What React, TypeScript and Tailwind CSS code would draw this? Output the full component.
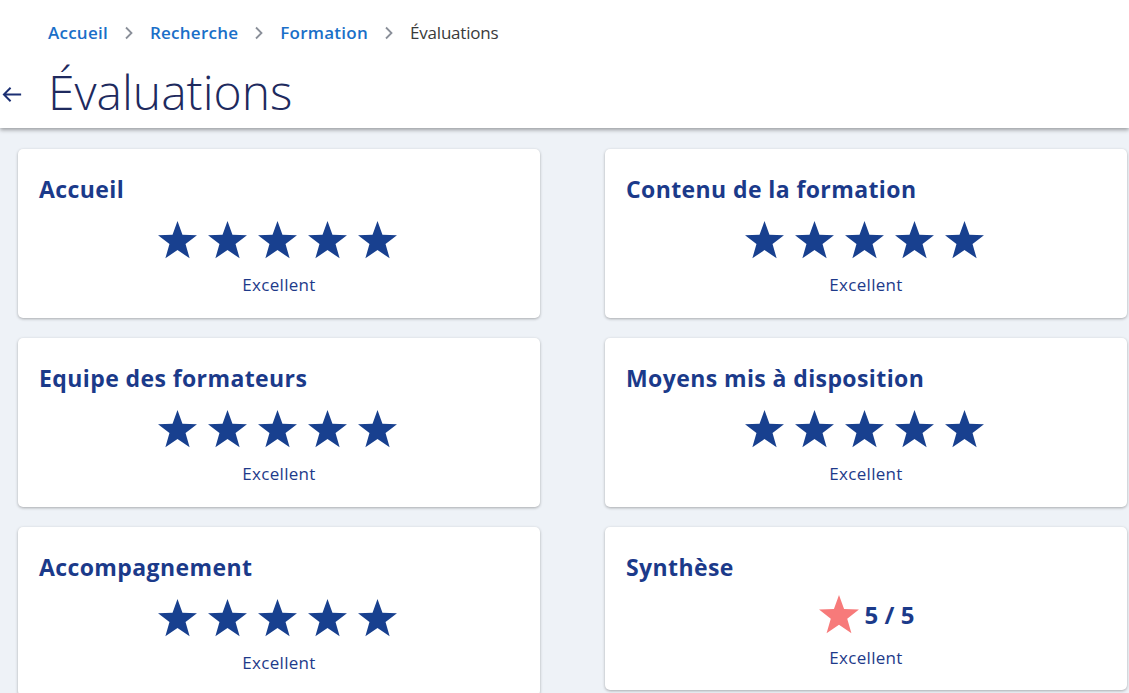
import React from 'react'

const font = { fontFamily: '"Open Sans", "Noto Sans", sans-serif' }

function Star({ color = '#18408f', size = 41 }: { color?: string; size?: number }) {
  return (
    <svg width={size} height={size} viewBox="0 0 24 24" className="block">
      <polygon
        fill={color}
        points="12,0.6 14.9,8.6 23.4,8.9 16.7,14.1 19.1,22.4 12,17.6 4.9,22.4 7.3,14.1 0.6,8.9 9.1,8.6"
      />
    </svg>
  )
}

function Chevron() {
  return (
    <svg width="10" height="14" viewBox="0 0 10 14" className="mx-[16px]">
      <path d="M2 1.5 L7.5 7 L2 12.5" fill="none" stroke="#8a8f99" strokeWidth="1.8" />
    </svg>
  )
}

type Item = { title: string; synth?: boolean }

const items: Item[] = [
  { title: 'Accueil' },
  { title: 'Contenu de la formation' },
  { title: 'Equipe des formateurs' },
  { title: 'Moyens mis à disposition' },
  { title: 'Accompagnement' },
  { title: 'Synthèse', synth: true },
]

function Card({ item }: { item: Item }) {
  return (
    <div
      className={
        'bg-white rounded-[5px] shadow-[0_1px_3px_rgba(0,0,0,0.3)] px-[21px] pt-[26px] flex flex-col ' +
        (item.synth ? 'h-[163px]' : 'h-[169px]')
      }
    >
      <h2 className="text-[23px] leading-[28px] font-bold tracking-[0.4px] text-[#1b3a8a]">{item.title}</h2>
      {item.synth ? (
        <div className="flex items-center justify-center mt-[14px] h-[40px]">
          <Star color="#f77a7a" size={42} />
          <span className="ml-[5px] text-[24px] font-bold text-[#1b3a8a] leading-none">5 / 5</span>
        </div>
      ) : (
        <div className="flex justify-center gap-[9px] mt-[17px] h-[41px] -ml-[3px]">
          {[0, 1, 2, 3, 4].map((i) => (
            <Star key={i} />
          ))}
        </div>
      )}
      <p
        className={
          'text-center text-[17px] leading-[20px] tracking-[0.3px] text-[#1e3a8a] ' +
          (item.synth ? 'mt-[13px]' : 'mt-[14px]')
        }
      >
        Excellent
      </p>
    </div>
  )
}

export default function App() {
  return (
    <div className="min-h-screen bg-[#eef2f7]" style={font}>
      <header className="bg-white h-[128px] shadow-[0_2px_4px_rgba(0,0,0,0.35)] relative z-10">
        <nav className="flex items-center pl-[48px] pt-[22px] text-[17px] leading-[22px] tracking-[0.25px]">
          <a href="#" className="font-semibold text-[#1a6fc8]">Accueil</a>
          <Chevron />
          <a href="#" className="font-semibold text-[#1a6fc8]">Recherche</a>
          <Chevron />
          <a href="#" className="font-semibold text-[#1a6fc8]">Formation</a>
          <Chevron />
          <span className="text-[#3a3a3a] tracking-[-0.2px]">Évaluations</span>
        </nav>
        <div className="flex items-center mt-[18px]">
          <svg width="23" height="23" viewBox="0 0 24 24" className="ml-[1px] mt-[4px]">
            <path d="M21 12 H3.5 M10 5 L3 12 L10 19" fill="none" stroke="#1b2f73" strokeWidth="2" />
          </svg>
          <h1 className="ml-[24px] text-[48px] leading-[60px] font-light text-[#1e2a5e]">Évaluations</h1>
        </div>
      </header>
      <main className="grid grid-cols-[522px_522px] gap-x-[65px] gap-y-[20px] pl-[18px] pt-[21px] pb-[20px] items-start">
        {items.map((it) => (
          <Card key={it.title} item={it} />
        ))}
      </main>
    </div>
  )
}
